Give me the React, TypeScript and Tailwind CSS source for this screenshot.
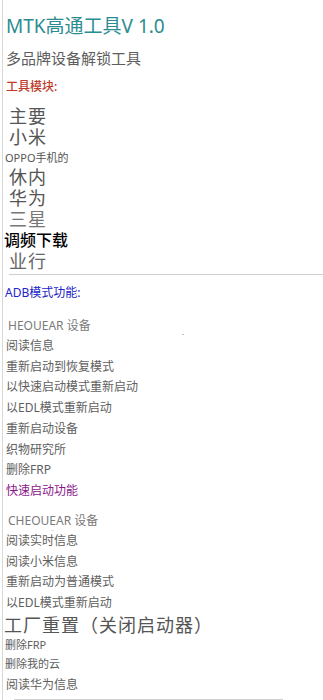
import React from "react";

const sans = { fontFamily: '"Noto Sans", "Noto Sans CJK SC", sans-serif' };

const adbItems = [
    "阅读信息",
    "重新启动到恢复模式",
    "以快速启动模式重新启动",
    "以EDL模式重新启动",
    "重新启动设备",
    "织物研究所",
    "删除FRP",
];

const fastbootItems = ["阅读实时信息", "阅读小米信息", "重新启动为普通模式", "以EDL模式重新启动"];

const Serif: React.FC<{ text: string; className?: string }> = ({ text, className = "" }) => (
    <div className={`pl-[3px] text-[18px] leading-[21px] text-[#555] tracking-[1px] ${className}`}>{text}</div>
);

export default function App() {
    return (
        <div className="w-[323px] h-[700px] overflow-hidden bg-white" style={sans}>
            <div className="ml-[2px] border-l border-[#d8d8d8] h-full pl-[3px]">
                {/* header */}
                <h1 className="pt-[13px] text-[19px] leading-[26px] text-[#2b8c91]">MTK高通工具V 1.0</h1>
                <p className="mt-[8px] text-[15px] leading-[22px] text-[#5e5e5e]">多品牌设备解锁工具</p>
                <p className="mt-[10px] text-[12px] leading-[16px] font-medium text-[#c0392b]">工具模块:</p>

                {/* brands */}
                <div className="mt-[11px]">
                    <Serif text="主要" />
                    <Serif text="小米" />
                    <div className="-ml-[1px] text-[11px] leading-[19px] text-[#555]">OPPO手机的</div>
                    <Serif text="休内" />
                    <Serif text="华为" />
                    <Serif text="三星" className="text-[#777]" />
                    <div className="-ml-[2px] text-[16px] leading-[21px] font-medium text-black">调频下载</div>
                    <Serif text="业行" className="text-[#666]" />
                    <div className="ml-[3px] mt-[2px] border-t border-[#cfcfcf]" />
                </div>

                {/* adb */}
                <p className="mt-[10px] -ml-[1px] text-[12px] leading-[16px] text-[#2222c8]">ADB模式功能:</p>
                <div className="relative mt-[15px] pl-[2px] text-[12px] leading-[20px] text-[#7a7a7a]">
                    HEOUEAR 设备
                    <span className="absolute left-[176px] top-[18px] w-[2px] h-[1px] bg-[#bbb]" />
                </div>
                <div className="flex flex-col">
                    {adbItems.map((t) => (
                        <div key={t} className="text-[12px] leading-[20.7px] text-[#606060]">{t}</div>
                    ))}
                </div>
                <div className="text-[12px] leading-[20px] text-[#8a168a]">快速启动功能</div>

                {/* fastboot */}
                <div className="relative mt-[10px] pl-[2px] text-[12px] leading-[20px] text-[#7a7a7a]">
                    CHEOUEAR 设备
                    <span className="absolute left-[45px] top-[16px] text-[6px] leading-[6px] text-[#777]">··</span>
                </div>
                <div className="flex flex-col">
                    {fastbootItems.map((t, i) => (
                        <div key={t + i} className="text-[12px] leading-[20.7px] text-[#606060]">{t}</div>
                    ))}
                </div>
                <div className="-ml-[2px] text-[18px] leading-[22px] text-[#555] tracking-[1px]">工厂重置（关闭启动器）</div>
                <div className="-ml-[1px] text-[11px] leading-[18px] text-[#606060]">删除FRP</div>
                <div className="-ml-[1px] text-[11px] leading-[20px] text-[#606060]">删除我的云</div>
                <div className="text-[12px] leading-[22px] text-[#606060]">阅读华为信息</div>
                <div className="ml-[8px] mt-[3px] mr-[40px] border-t border-[#cfcfcf]" />
            </div>
        </div>
    );
}
